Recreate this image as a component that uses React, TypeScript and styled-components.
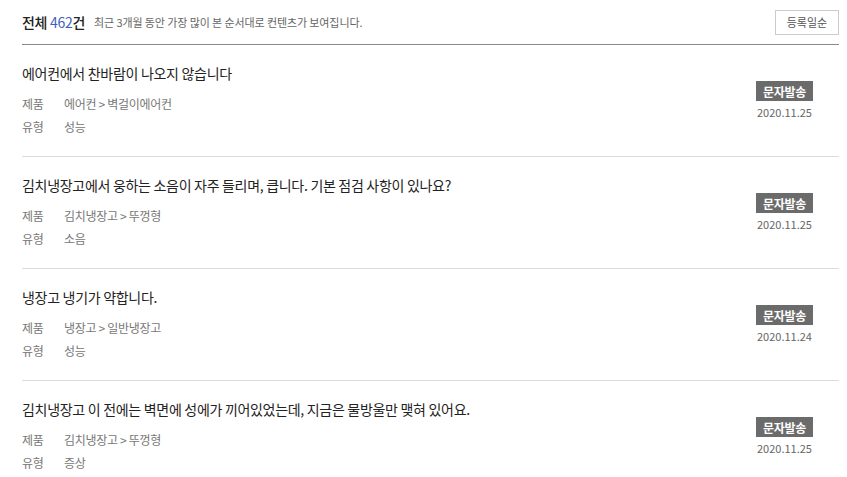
import React from "react";
import styled, { createGlobalStyle } from "styled-components";

const Global = createGlobalStyle`
  html, body { margin: 0; padding: 0; background: #fff; }
  body { font-family: "Noto Sans CJK KR", "Noto Sans", sans-serif; color: #222; }
`;

const Page = styled.div`
  padding: 0 8px 0 22px;
  width: 817px;
`;

const Header = styled.div`
  display: flex;
  align-items: center;
  height: 44px;
  border-bottom: 1px solid #8a8a8a;
`;

const Total = styled.h2`
  margin: 0;
  font-size: 14px;
  font-weight: 500;
  color: #222;
  letter-spacing: -0.3px;
`;

const Count = styled.span`
  color: #3f5fbf;
  font-weight: 400;
`;

const Note = styled.span`
  margin-left: 9px;
  font-size: 11px;
  color: #666;
  letter-spacing: -0.1px;
`;

const SortButton = styled.button`
  margin-left: auto;
  width: 64px;
  height: 25px;
  border: 1px solid #ccc;
  background: #fff;
  font-family: inherit;
  font-size: 11px;
  color: #555;
  padding: 0;
  cursor: pointer;
`;

const Item = styled.div`
  display: flex;
  border-bottom: 1px solid #dcdcdc;
  height: 112px;
  box-sizing: border-box;
`;

const Body = styled.div`
  flex: 1;
  padding-top: 18px;
`;

const Title = styled.div`
  font-size: 14px;
  color: #222;
  line-height: 20px;
  letter-spacing: -0.3px;
  margin-bottom: 11px;
`;

const Meta = styled.div`
  display: grid;
  grid-template-columns: 42px 1fr;
  row-gap: 3px;
  font-size: 12px;
  line-height: 20px;
  color: #777;
  letter-spacing: -0.3px;
`;

const Side = styled.div`
  display: flex;
  flex-direction: column;
  align-items: center;
  padding-top: 36px;
  box-sizing: border-box;
  width: 96px;
  padding-right: 13px;
`;

const SmsBadge = styled.span`
  display: inline-flex;
  align-items: center;
  justify-content: center;
  width: 57px;
  height: 20px;
  background: #6b6b6b;
  color: #fff;
  font-size: 12px;
  font-weight: 700;
  letter-spacing: -0.3px;
`;

const DateText = styled.span`
  margin-top: 3px;
  font-size: 11px;
  color: #666;
  line-height: 16px;
`;

type Row = { title: string; product: string; kind: string; date: string };

const rows: Row[] = [
  { title: "에어컨에서 찬바람이 나오지 않습니다", product: "에어컨 > 벽걸이에어컨", kind: "성능", date: "2020.11.25" },
  { title: "김치냉장고에서 웅하는 소음이 자주 들리며, 큽니다. 기본 점검 사항이 있나요?", product: "김치냉장고 > 뚜껑형", kind: "소음", date: "2020.11.25" },
  { title: "냉장고 냉기가 약합니다.", product: "냉장고 > 일반냉장고", kind: "성능", date: "2020.11.24" },
  { title: "김치냉장고 이 전에는 벽면에 성에가 끼어있었는데, 지금은 물방울만 맺혀 있어요.", product: "김치냉장고 > 뚜껑형", kind: "증상", date: "2020.11.25" },
];

export default function App() {
  return (
    <Page>
      <Global />
      <Header>
        <Total>
          전체 <Count>462</Count>건
        </Total>
        <Note>최근 3개월 동안 가장 많이 본 순서대로 컨텐츠가 보여집니다.</Note>
        <SortButton>등록일순</SortButton>
      </Header>
      {rows.map((r, i) => (
        <Item key={i}>
          <Body>
            <Title>{r.title}</Title>
            <Meta>
              <span>제품</span>
              <span>{r.product}</span>
              <span>유형</span>
              <span>{r.kind}</span>
            </Meta>
          </Body>
          <Side>
            <SmsBadge>문자발송</SmsBadge>
            <DateText>{r.date}</DateText>
          </Side>
        </Item>
      ))}
    </Page>
  );
}
